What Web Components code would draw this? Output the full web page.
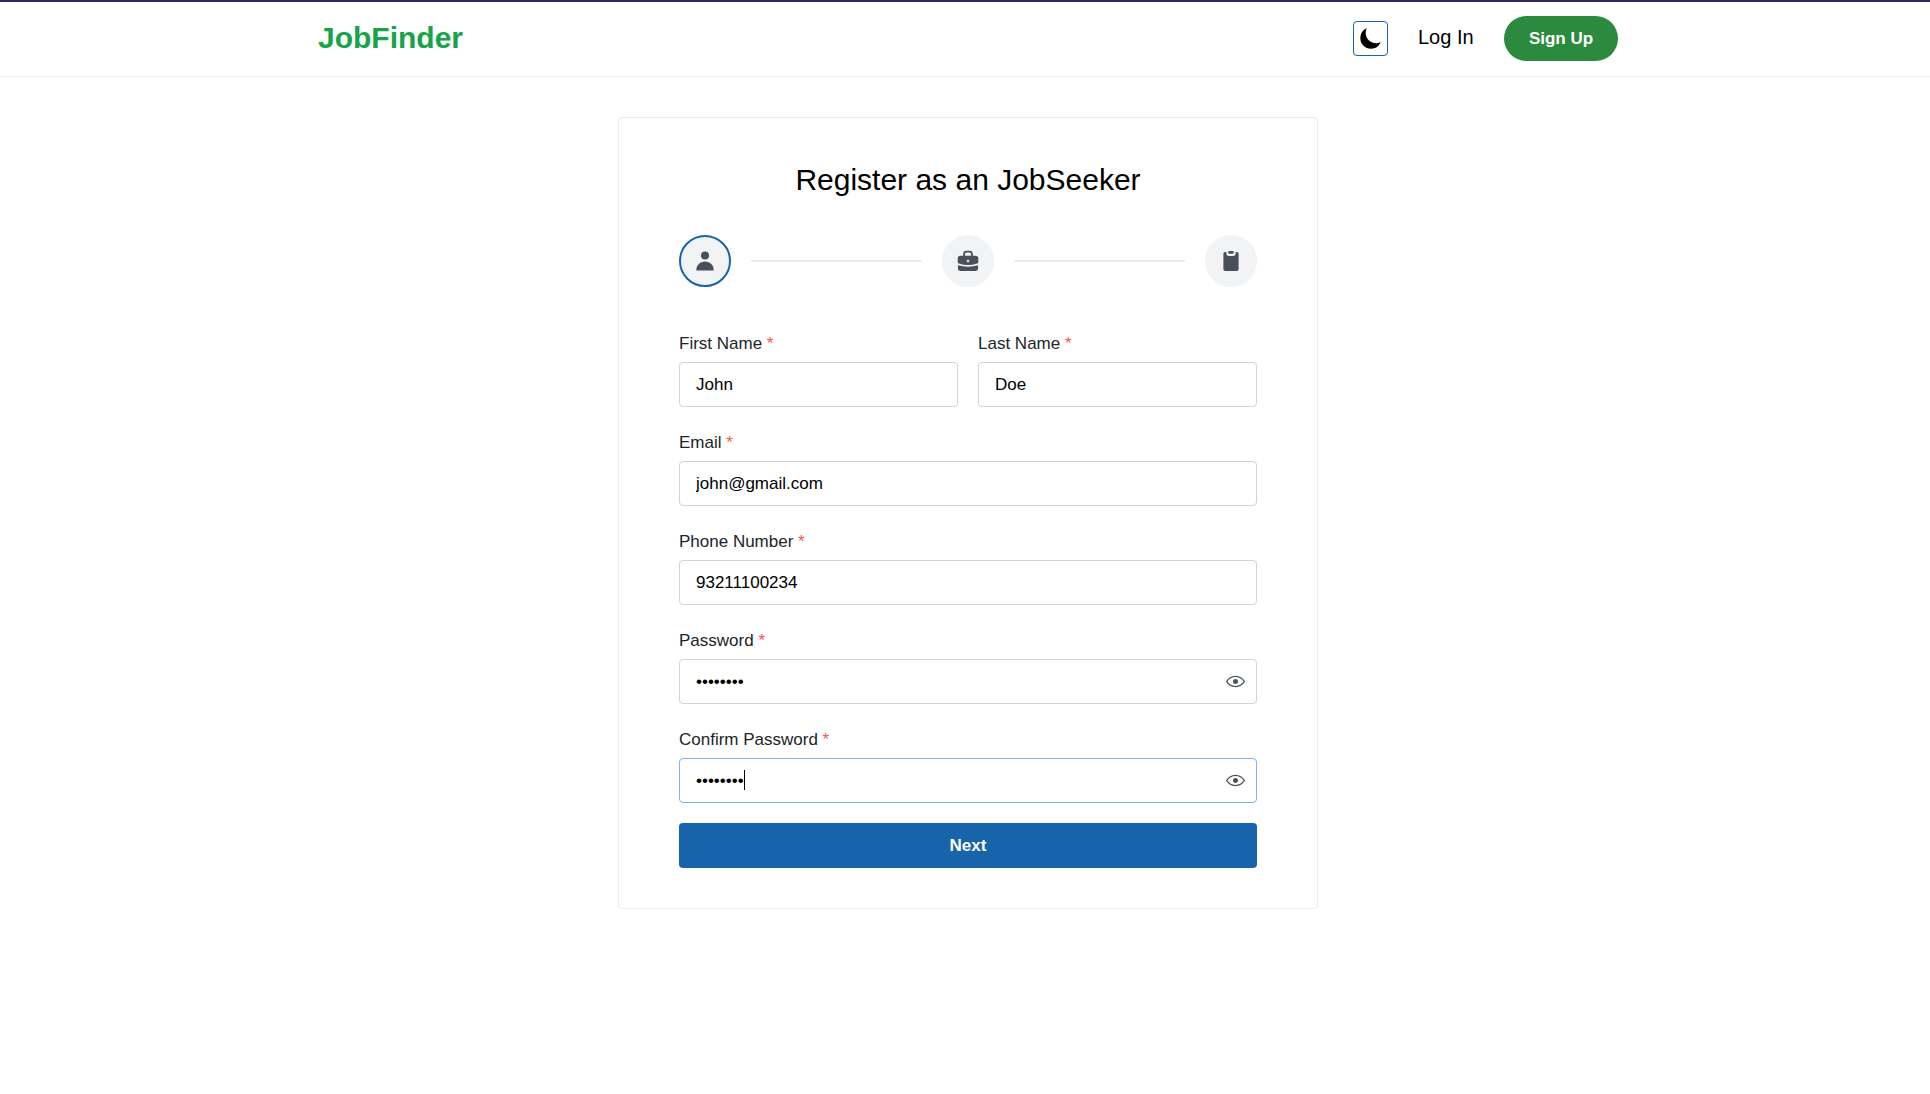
<!DOCTYPE html>
<html lang="en">
<head>
<meta charset="utf-8">
<title>JobFinder</title>
<style>
  body { margin: 0; background: #fff; color: #000; font-family: "Liberation Sans", Arial, sans-serif; font-size: 17px; border-top: 2px solid #35245e; }
</style>
</head>
<body>
<job-header></job-header>
<main>
  <register-card heading="Register as an JobSeeker">
    <step-progress></step-progress>
    <register-form></register-form>
  </register-card>
</main>
<script>
const define = (name, html, setup) => customElements.define(name, class extends HTMLElement {
  connectedCallback() {
    if (this.shadowRoot) return;
    const root = this.attachShadow({ mode: "open" });
    root.innerHTML = html;
    if (setup) setup(this, root);
  }
});

define("job-header", `
<style>
  :host { display: block; background: #fff; border-bottom: 1px solid #e9ecef; padding: 14px 0 15px 6px; }
  header { display: flex; align-items: center; justify-content: space-between; max-width: 1300px; margin: 0 auto; }
  a { padding-bottom: 2px; color: inherit; text-decoration: none; }
  .logo { color: #16a34a; font-size: 30px; line-height: 41px; font-weight: bold; }
  nav { display: flex; align-items: center; gap: 30px; }
  .login { min-width: 56px; font-size: 20px; line-height: 25px; }
  .theme { display: grid; place-items: center; box-sizing: border-box; width: 35px; height: 35px; padding: 0; background: #fff; border: 1px solid #1864ab; border-radius: 4px; }
  .signup { height: 45px; min-width: 114px; padding: 0 24px; background: #2b8a3e; color: #fff; border: 0; border-radius: 23px; font: bold 17px "Liberation Sans", Arial, sans-serif; }
</style>
<header>
  <a class="logo" href="#">JobFinder</a>
  <nav>
    <button class="theme" type="button" aria-label="Toggle theme">
      <svg width="23" height="23" viewBox="0 0 22 22"><path d="M7.4 1.2A10.6 10.6 0 0 0 6.4 5.6C6.4 11.5 11 15.5 16.2 15.5C18 15.5 19.3 15.1 20.7 14.3C19.3 18.3 15.8 20.7 11.6 20.7C5.9 20.7 1.3 16.4 1.3 10.7C1.3 6.3 3.6 2.8 7.4 1.2Z"/></svg>
    </button>
    <a class="login" href="#">Log In</a>
    <button class="signup" type="button">Sign Up</button>
  </nav>
</header>`);

define("register-card", `
<style>
  :host { display: block; padding: 40px 0 40px 6px; }
  section { box-sizing: border-box; max-width: 700px; margin: 0 auto; padding: 40px 60px; border: 1px solid #e9ecef; border-radius: 4px; }
  h1 { margin: 0 0 34px; font-size: 30px; line-height: 43px; font-weight: normal; text-align: center; }
</style>
<section><h1></h1><slot></slot></section>`,
(el, root) => { root.querySelector("h1").textContent = el.getAttribute("heading"); });

define("step-progress", `
<style>
  :host { display: flex; align-items: center; gap: 20px; margin-bottom: 41px; }
  .step { display: grid; place-items: center; box-sizing: border-box; width: 52px; height: 52px; border-radius: 50%; background: #f1f3f5; border: 2px solid #f1f3f5; }
  .step.active { border-color: #1864ab; }
  .line { flex: 1; height: 2px; background: #e9ecef; }
  svg { display: block; fill: #495057; }
</style>
<div class="step active"><svg width="22" height="22" viewBox="0 0 22 22"><circle cx="11" cy="5.4" r="4"/><path d="M2.3 20.4C2.3 15.4 5.9 11.6 11 11.6S19.7 15.4 19.7 20.4Z"/></svg></div>
<div class="line"></div>
<div class="step"><svg width="22" height="22" viewBox="0 0 22 22"><path fill-rule="evenodd" d="M6.2 5.8V4.2Q6.2 .8 9.3 .8H12.7Q15.8 .8 15.8 4.2V5.8H18.6Q21.3 5.8 21.3 8.5V12.2Q21.3 13.2 20.2 13.5Q11 16.5 1.8 13.5Q.7 13.2 .7 12.2V8.5Q.7 5.8 3.4 5.8ZM8 5.8H14V4.3Q14 2.6 12.5 2.6H9.5Q8 2.6 8 4.3ZM11 9.2L9.5 10.9L11 12.6L12.5 10.9ZM.9 15.2Q11 18.1 21.1 15.2V18.6Q21.1 21 18.7 21H3.3Q.9 21 .9 18.6Z"/></svg></div>
<div class="line"></div>
<div class="step"><svg width="22" height="22" viewBox="0 0 22 22"><rect x="8.3" y=".9" width="5.4" height="2.8" rx=".8"/><path d="M5 2.1H6.4V3.4Q6.4 6 9 6H13Q15.6 6 15.6 3.4V2.1H17Q18.6 2.1 18.6 3.8V19.2Q18.6 21 16.8 21H5.2Q3.4 21 3.4 19.2V3.8Q3.4 2.1 5 2.1Z"/></svg></div>`);

define("form-field", `
<style>
  :host { display: block; min-width: 0; }
  label { display: block; margin-bottom: 2px; color: #212529; line-height: 32px; }
  label b { font-weight: normal; }
  label span { color: #fa5252; }
  .box { display: flex; align-items: center; position: relative; box-sizing: border-box; height: 45px; background: #fff; border: 1px solid #ced4da; border-radius: 4px; }
  .box:focus-within { border-color: #7db2e5; }
  input { flex: 1; min-width: 0; height: 43px; box-sizing: border-box; padding: 0 16px; border: 0; outline: 0; background: transparent; color: #000; font: inherit; }
  button { display: grid; place-items: center; width: 41px; height: 43px; padding: 0; border: 0; background: transparent; }
  svg { fill: #495057; }
  :host([caret]) input { caret-color: transparent; }
  :host([caret]) .box::before { content: ""; position: absolute; left: 64px; top: 11px; width: 1px; height: 20px; background: #000; }
</style>
<label for="input"><b></b> <span aria-hidden="true">*</span></label>
<div class="box"><input id="input" required></div>`,
(el, root) => {
  root.querySelector("b").textContent = el.getAttribute("label");
  const input = root.querySelector("input");
  input.type = el.getAttribute("type") || "text";
  input.value = el.getAttribute("value");
  if (input.type === "password") {
    const button = document.createElement("button");
    button.type = "button";
    button.setAttribute("aria-label", "Show password");
    button.innerHTML = '<svg width="19" height="19" viewBox="0 0 15 15"><path fill-rule="evenodd" d="M7.5 11C4.80285 11 2.52952 9.62184 1.09622 7.50001C2.52952 5.37816 4.80285 4 7.5 4C10.1971 4 12.4705 5.37816 13.9038 7.50001C12.4705 9.62183 10.1971 11 7.5 11ZM7.5 3C4.30786 3 1.65639 4.70638 .076 7.23501C-.0253 7.39715-.0253 7.60288 .076 7.76501C1.65639 10.2936 4.30786 12 7.5 12C10.6921 12 13.3436 10.2936 14.924 7.76501C15.0253 7.60288 15.0253 7.39715 14.924 7.23501C13.3436 4.70638 10.6921 3 7.5 3ZM7.5 9.5C8.60457 9.5 9.5 8.60457 9.5 7.5C9.5 6.39543 8.60457 5.5 7.5 5.5C6.39543 5.5 5.5 6.39543 5.5 7.5C5.5 8.60457 6.39543 9.5 7.5 9.5Z"/></svg>';
    button.onclick = () => { input.type = input.type === "password" ? "text" : "password"; };
    root.querySelector(".box").append(button);
  }
  if (el.hasAttribute("caret")) {
    input.focus();
    input.addEventListener("input", () => el.removeAttribute("caret"));
    input.addEventListener("blur", () => el.removeAttribute("caret"));
  }
});

define("register-form", `
<style>
  :host { display: block; }
  form { display: flex; flex-direction: column; gap: 20px; }
  .names { display: grid; grid-template-columns: 1fr 1fr; gap: 20px; }
  .next { height: 45px; padding: 0; border: 0; border-radius: 4px; background: #1864ab; color: #fff; font: bold 17px "Liberation Sans", Arial, sans-serif; }
</style>
<form>
  <div class="names">
    <form-field label="First Name" value="John"></form-field>
    <form-field label="Last Name" value="Doe"></form-field>
  </div>
  <form-field label="Email" type="email" value="john@gmail.com"></form-field>
  <form-field label="Phone Number" type="tel" value="93211100234"></form-field>
  <form-field label="Password" type="password" value="password"></form-field>
  <form-field label="Confirm Password" type="password" value="password" caret></form-field>
  <button class="next" type="submit">Next</button>
</form>`);
</script>
</body>
</html>
